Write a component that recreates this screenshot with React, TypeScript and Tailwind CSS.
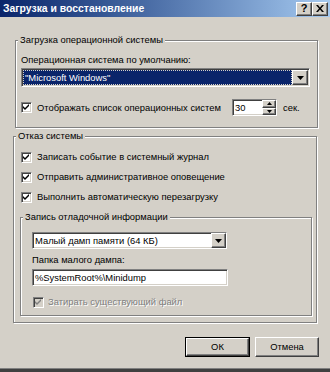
import React from 'react';

const sunken =
  'border border-t-[#808080] border-l-[#808080] border-b-white border-r-white shadow-[inset_1px_1px_0_#404040,inset_-1px_-1px_0_#d4d0c8]';
const raised =
  'bg-[#d4d0c8] border border-t-white border-l-white border-b-[#404040] border-r-[#404040] shadow-[inset_-1px_-1px_0_#808080,inset_1px_1px_0_#d4d0c8]';

const Check: React.FC<{ disabled?: boolean }> = ({ disabled }) => (
  <div className={`${sunken} w-[11px] h-[11px] shrink-0 flex items-center justify-center ${disabled ? 'bg-[#d4d0c8]' : 'bg-white'}`}>
    <svg width="7" height="7" viewBox="0 0 7 7">
      <path d="M0 2L2 4L6 0L6 2L2 6L0 4Z" fill={disabled ? '#808080' : '#000'} />
    </svg>
  </div>
);

const Arrow = () => (
  <svg width="7" height="4" viewBox="0 0 7 4">
    <path d="M0 0H7L3.5 4Z" fill="#000" />
  </svg>
);

const Group: React.FC<{ title: string; className?: string; children: React.ReactNode }> = ({ title, className, children }) => (
  <div className={`relative border border-[#808080] shadow-[inset_1px_1px_0_#fff,1px_1px_0_#fff] ${className ?? ''}`}>
    <span className="absolute left-[2px] -top-[7px] bg-[#d4d0c8] px-[2px] leading-[12px] whitespace-nowrap">{title}</span>
    {children}
  </div>
);

const CheckRow: React.FC<{ label: string }> = ({ label }) => (
  <div className="h-[20px] flex items-center pl-[7px]">
    <Check />
    <span className="ml-[5px] whitespace-nowrap">{label}</span>
  </div>
);

export default function App() {
  return (
    <div className="w-[330px] h-[372px] bg-[#d4d0c8] flex flex-col overflow-hidden text-[9.4px] leading-[12px] text-black font-['Liberation_Sans',Arial,sans-serif]">
      {/* title bar */}
      <div className="h-[17px] shrink-0 flex items-center justify-between pl-[3px] pr-[2px] bg-linear-to-r from-[#0a246a] to-[#a6caf0]">
        <span className="text-white font-bold text-[10.4px] whitespace-nowrap">Загрузка и восстановление</span>
        <div className="flex">
          <div className={`${raised} w-[16px] h-[14px] flex items-center justify-center font-bold text-[11px] leading-none`}>?</div>
          <div className={`${raised} w-[16px] h-[14px] flex items-center justify-center`}>
            <svg width="8" height="7" viewBox="0 0 8 7">
              <path d="M0 0H2L4 2.5L6 0H8L5 3.5L8 7H6L4 4.5L2 7H0L3 3.5Z" fill="#000" />
            </svg>
          </div>
        </div>
      </div>

      <div className="flex-1 flex flex-col">
        <Group title="Загрузка операционной системы" className="ml-[15px] mt-[23px] w-[303px] h-[88px] shrink-0">
          <div className="flex flex-col pl-[5px]">
            <span className="mt-[13px] whitespace-nowrap">Операционная система по умолчанию:</span>
            <div className={`${sunken} mt-[2px] w-[289px] h-[19px] bg-white flex p-[1px]`}>
              <div className="flex-1 bg-[#0a246a] border border-dotted border-[#d4d0c8] text-white pl-[1px] flex items-center whitespace-nowrap">
                "Microsoft Windows"
              </div>
              <div className={`${raised} w-[16px] flex items-center justify-center`}>
                <Arrow />
              </div>
            </div>
            <div className="mt-[12px] h-[17px] flex items-center">
              <div className="w-[211px] flex items-center">
                <Check />
                <span className="ml-[5px] whitespace-nowrap">Отображать список операционных систем</span>
              </div>
              <div className={`${sunken} w-[45px] h-[17px] bg-white flex`}>
                <span className="flex-1 pl-[2px] flex items-center">30</span>
                <div className="w-[14px] flex flex-col">
                  <div className={`${raised} flex-1 flex items-center justify-center`}>
                    <svg width="5" height="3" viewBox="0 0 5 3"><path d="M0 3H5L2.5 0Z" fill="#000" /></svg>
                  </div>
                  <div className={`${raised} flex-1 flex items-center justify-center`}>
                    <svg width="5" height="3" viewBox="0 0 5 3"><path d="M0 0H5L2.5 3Z" fill="#000" /></svg>
                  </div>
                </div>
              </div>
              <span className="ml-[6px]">сек.</span>
            </div>
          </div>
        </Group>

        <Group title="Отказ системы" className="ml-[13px] mt-[8px] w-[304px] h-[187px] shrink-0">
          <div className="flex flex-col pt-[10px]">
            <CheckRow label="Записать событие в системный журнал" />
            <CheckRow label="Отправить административное оповещение" />
            <CheckRow label="Выполнить автоматическую перезагрузку" />
            <Group title="Запись отладочной информации" className="ml-[6px] mt-[10px] w-[292px] h-[99px]">
              <div className="flex flex-col pl-[11px]">
                <div className={`${sunken} mt-[14px] w-[195px] h-[17px] bg-white flex`}>
                  <span className="flex-1 pl-[2px] flex items-center whitespace-nowrap">Малый дамп памяти (64 КБ)</span>
                  <div className={`${raised} w-[15px] flex items-center justify-center`}>
                    <Arrow />
                  </div>
                </div>
                <span className="mt-[5px] whitespace-nowrap">Папка малого дампа:</span>
                <div className={`${sunken} mt-[3px] w-[196px] h-[17px] bg-white flex items-center pl-[2px] whitespace-nowrap`}>
                  %SystemRoot%\Minidump
                </div>
                <div className="mt-[9px] h-[14px] flex items-center pl-[1px]">
                  <Check disabled />
                  <span className="ml-[4px] text-[#808080] [text-shadow:1px_1px_0_#fff] whitespace-nowrap">Затирать существующий файл</span>
                </div>
              </div>
            </Group>
          </div>
        </Group>

        <div className="mt-[14px] flex justify-end gap-[5px] pr-[11px]">
          <div className="border border-black">
            <div className={`${raised} w-[63px] h-[18px] flex items-center justify-center`}>ОК</div>
          </div>
          <div className={`${raised} w-[64px] h-[20px] flex items-center justify-center`}>Отмена</div>
        </div>
      </div>

      <div className="h-[4px] shrink-0 border-t border-[#808080] bg-[#404040]" />
    </div>
  );
}
